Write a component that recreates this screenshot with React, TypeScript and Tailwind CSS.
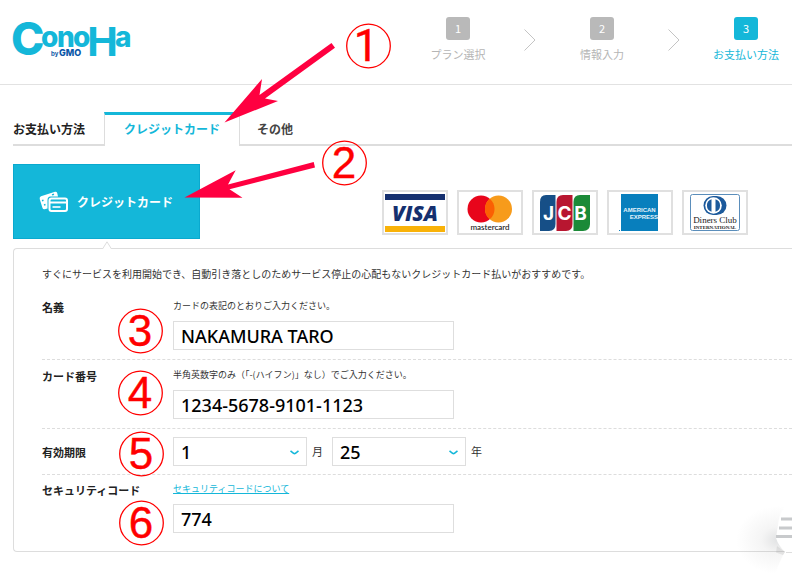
import { ReactNode, useState } from 'react';
import clsx from 'clsx';

const steps = [
    { no: 1, label: 'プラン選択' },
    { no: 2, label: '情報入力' },
    { no: 3, label: 'お支払い方法' },
];

const inputClass = 'h-[29px] w-full max-w-[281px] border border-[#dedede] bg-white px-[7px] text-lg leading-none font-medium text-black outline-none font-["Noto_Sans","Noto_Sans_CJK_JP",sans-serif]';

function Logo() {
    return (
        <svg width="120" height="38" viewBox="13 20 120 38" className="overflow-visible" fill="#14b7d9" fontWeight="800" fontFamily="Inter, sans-serif" role="img" aria-label="ConoHa by GMO">
            <text x="11" y="55" fontSize="45">C</text>
            <text x="41" y="47" fontSize="28">o</text>
            <text x="57" y="47" fontSize="28">n</text>
            <text x="73" y="47" fontSize="28">o</text>
            <text x="87" y="56" fontSize="43" fontWeight="700" fontFamily="'Liberation Sans', sans-serif">H</text>
            <text x="115" y="47" fontSize="28">a</text>
            <text x="51" y="56" fontSize="6" fontWeight="700" fill="#0b57a8">by</text>
            <text x="59" y="56" fontSize="9" fill="#0b57a8">GMO</text>
        </svg>
    );
}

function Steps() {
    return (
        <ol className="flex gap-8">
            {steps.map((step, i) => {
                const active = step.no === 3;
                return (
                    <li key={step.no} className="flex items-center gap-8">
                        {i > 0 && (
                            <svg width="12" height="22" viewBox="0 0 12 22" fill="none" stroke="#c4c4c4">
                                <path d="M0.5 0.5 11 11 0.5 21.5" />
                            </svg>
                        )}
                        <div className={clsx('flex w-[68px] flex-col items-center gap-1.5 text-[11px]', active ? 'text-[#14b7d9]' : 'text-[#b5b5b5]')}>
                            <span className={clsx('flex h-[23px] w-6 items-center justify-center rounded-[3px] text-white', active ? 'bg-[#14b7d9]' : 'bg-[#b9b9b9]')}>
                                {step.no}
                            </span>
                            <span className="leading-4 whitespace-nowrap">{step.label}</span>
                        </div>
                    </li>
                );
            })}
        </ol>
    );
}

function CardsIcon() {
    return (
        <svg width="30" height="22" viewBox="0 0 30 22" fill="none">
            <path d="M2 5.2 16 0.8Q17.6 0.4 18.2 2L19 5.5H11.5Q8.5 5.5 8.5 9V17.5L5.5 18.2Q4 18.4 3.5 17L0.7 8Q0.4 6 2 5.2Z" fill="#fff" />
            <path d="M3 9.8 4.5 9.3M5 14 6.5 13.5M13 3.9 15 3.3" stroke="#14b7d9" strokeWidth="1.5" />
            <rect x="10.5" y="7.5" width="17.5" height="12.5" rx="2" stroke="#fff" strokeWidth="2" />
            <path d="M10.5 11.5H28" stroke="#fff" strokeWidth="2" />
            <path d="M13.5 16H21.5" stroke="#fff" strokeWidth="1.6" />
        </svg>
    );
}

function BrandCard({ label, children }: { label: string; children: ReactNode }) {
    return (
        <li className="border-2 border-[#e0e0e0] bg-white">
            <svg width="62" height="41" viewBox="0 0 62 41" role="img" aria-label={label}>
                {children}
            </svg>
        </li>
    );
}

function Brands() {
    return (
        <ul className="flex gap-[9px] pb-1">
            <BrandCard label="VISA">
                <rect x="1" y="2" width="60" height="6" fill="#15306f" />
                <rect x="1" y="34" width="60" height="6" fill="#f9b208" />
                <text x="31" y="29" textAnchor="middle" fontSize="21" fontWeight="800" fontStyle="italic" fontFamily="'Open Sans', sans-serif" fill="#15306f">VISA</text>
            </BrandCard>
            <BrandCard label="mastercard">
                <circle cx="22" cy="17" r="13.5" fill="#e8051b" />
                <circle cx="39.5" cy="17" r="13.5" fill="#f79b1b" />
                <path d="M30.75 6.7A13.5 13.5 0 0 1 30.75 27.3A13.5 13.5 0 0 1 30.75 6.7Z" fill="#fb5f03" />
                <text x="31" y="38" textAnchor="middle" fontSize="8" fontWeight="500" fontFamily="Lato, sans-serif" fill="#111">mastercard</text>
            </BrandCard>
            <BrandCard label="JCB">
                <path d="M6 10Q6 3 12 3H21.5V32Q21.5 39 15 39H6Z" fill="#164f87" />
                <path d="M22.5 10Q22.5 3 29 3H38.5V32Q38.5 39 32 39H22.5Z" fill="#b81630" />
                <path d="M39.5 10Q39.5 3 46 3H56V32Q56 39 49 39H39.5Z" fill="#1b8a38" />
                <g fill="#fff" fontSize="19" fontWeight="700" fontFamily="Inter, sans-serif" textAnchor="middle">
                    <text x="14.5" y="28">J</text>
                    <text x="30.5" y="28">C</text>
                    <text x="46.5" y="28">B</text>
                </g>
            </BrandCard>
            <BrandCard label="AMERICAN EXPRESS">
                <rect x="12" y="2" width="37" height="37" fill="#087fbd" />
                <g fill="#e6f4fb" fontSize="6" fontWeight="700" fontFamily="'Liberation Sans', sans-serif">
                    <text x="30.5" y="20" textAnchor="middle">AMERICAN</text>
                    <text x="49" y="27" textAnchor="end">EXPRESS</text>
                </g>
                <path d="M10 38.5H11" stroke="#087fbd" />
            </BrandCard>
            <BrandCard label="Diners Club INTERNATIONAL">
                <rect x="6.5" y="2.5" width="49" height="36" rx="2" fill="#fff" stroke="#5b8ebb" />
                <path d="M29 4H32.5A10 9.5 0 0 1 32.5 23H29A9.5 9.5 0 0 1 29 4Z" fill="#1c5a9c" />
                <circle cx="29.5" cy="13.5" r="8.3" fill="#fff" />
                <path d="M27.5 7.3V19.7A6.5 6.5 0 0 1 27.5 7.3ZM31.5 7.3V19.7A6.5 6.5 0 0 0 31.5 7.3Z" fill="#1c5a9c" />
                <text x="31" y="31" textAnchor="middle" fontSize="9" fontFamily="'Liberation Serif', serif" fill="#222">Diners Club</text>
                <text x="31" y="37" textAnchor="middle" fontSize="5" fontWeight="700" fontFamily="'Liberation Serif', serif" fill="#222">INTERNATIONAL</text>
            </BrandCard>
        </ul>
    );
}

function Row({ label, htmlFor, className, children }: { label: string; htmlFor: string; className?: string; children: ReactNode }) {
    return (
        <div className={clsx('flex', className)}>
            <label htmlFor={htmlFor} className="w-[131px] shrink-0 text-[11px] leading-[18px] font-bold text-[#222]">{label}</label>
            <div className="flex min-w-0 flex-1 flex-col gap-[7px]">{children}</div>
        </div>
    );
}

function SelectBox({ id, label, value, options }: { id: string; label: string; value: string; options: string[] }) {
    const [current, setCurrent] = useState(value);
    return (
        <div className="relative w-[134px]">
            <select
                id={id}
                aria-label={label}
                value={current}
                onChange={(e) => setCurrent(e.target.value)}
                className='block h-[29px] w-full appearance-none border border-[#dedede] bg-white px-[7px] text-lg leading-none font-medium text-black outline-none font-["Noto_Sans","Noto_Sans_CJK_JP",sans-serif]'
            >
                {options.map((o) => <option key={o}>{o}</option>)}
            </select>
            <svg width="9" height="5" viewBox="0 0 9 5" fill="none" stroke="#14b7d9" strokeWidth="1.6" className="pointer-events-none absolute top-[13px] right-2">
                <path d="M0.5 0.8 3.6 3.3Q4.5 3.9 5.4 3.3L8.5 0.8" />
            </svg>
        </div>
    );
}

const marks = [
    { no: 1, x: 368, y: 46 },
    { no: 2, x: 344, y: 163 },
    { no: 3, x: 140, y: 331 },
    { no: 4, x: 140, y: 393 },
    { no: 5, x: 141, y: 454 },
    { no: 6, x: 141, y: 523 },
];

// Red arrows and numbers laid over the form
function Guide() {
    return (
        <svg className="pointer-events-none absolute top-0 left-0" width="400" height="560" viewBox="0 0 400 560">
            <g fill="#ff0040">
                <path d="M224.5 122.5 262 79 259.5 95 331.5 43 335 47.8 265 98.5 278 101Z" />
                <path d="M184.5 197.5 235.7 170.3 228 184.5 313.7 162 315 167.5 229.5 189.3 242.5 197.7Z" />
            </g>
            {marks.map((m) => (
                <g key={m.no} fill="#f00">
                    <circle cx={m.x + 0.5} cy={m.y} r="21.8" fill="none" stroke="#f00" strokeWidth="1.3" />
                    <text
                        x={m.no === 1 ? m.x - 2 : m.x}
                        y={m.y + 15}
                        textAnchor="middle"
                        fontSize="44"
                        stroke="#f00"
                        strokeWidth="0.4"
                        fontFamily={m.no === 1 ? 'Roboto, sans-serif' : "'Liberation Sans', sans-serif"}
                    >
                        {m.no}
                    </text>
                </g>
            ))}
        </svg>
    );
}

function CornerMenu() {
    return (
        <svg className="pointer-events-none absolute right-0 bottom-0" width="60" height="70" viewBox="0 0 60 70">
            <defs>
                <radialGradient id="corner-shade">
                    <stop offset="0" stopColor="#8a8f94" stopOpacity="0.26" />
                    <stop offset="0.4" stopColor="#999" stopOpacity="0.1" />
                    <stop offset="1" stopColor="#999" stopOpacity="0" />
                </radialGradient>
            </defs>
            <ellipse cx="46" cy="35" rx="42" ry="34" fill="url(#corner-shade)" />
            <path d="M60 0H54Q47 8 46 20L44 33Q46 40 53 47L51 50 42 70H60Z" fill="#fff" />
            <path d="M49 14H60M47 23H60M44 31.5H60" stroke="#c8cacc" strokeWidth="3.2" />
            <path d="M54 47.5H60" stroke="#dedede" />
            <path d="M45 41 53 47 51 50 44 47.5Z" fill="#999" fillOpacity="0.2" />
        </svg>
    );
}

export default function App() {
    const [holder, setHolder] = useState('NAKAMURA TARO');
    const [cardNumber, setCardNumber] = useState('1234-5678-9101-1123');
    const [code, setCode] = useState('774');

    return (
        <div className='relative min-h-screen bg-white font-["Noto_Sans_CJK_JP",sans-serif] text-[#333]'>
            <header className="flex items-start justify-between border-b border-[#e2e2e2] pr-3 pb-[22px] pl-[13px]">
                <div className="pt-5"><Logo /></div>
                <div className="pt-[17px]"><Steps /></div>
            </header>

            <main className="pt-[27px] pb-[22px] pl-[13px]">
                <nav className="flex h-[34px] text-xs font-bold">
                    <h1 className="w-[91px] border-b-2 border-[#ddd] leading-[34px] text-[#222]">お支払い方法</h1>
                    <a href="#card" className="w-[136px] border-x border-t-3 border-x-[#ddd] border-t-[#14b7d9] text-center leading-[28px] text-[#14b7d9]">クレジットカード</a>
                    <div className="flex-1 border-b-2 border-[#ddd] pl-[17px] leading-[34px] text-[#444]">
                        <a href="#other">その他</a>
                    </div>
                </nav>

                <div className="mt-[18px] flex items-end justify-between pr-11">
                    <button type="button" className="flex h-[75px] w-[187px] items-center gap-2 border border-[#0aa9cf] bg-[#14b7d9] pl-[25px] text-xs font-bold text-white">
                        <CardsIcon />
                        クレジットカード
                    </button>
                    <Brands />
                </div>

                <form className="relative mt-[9px] rounded-l border border-r-0 border-[#ddd] pt-[17px] pb-[18px] pl-7">
                    <svg className="absolute -top-2 left-[88px]" width="10" height="9" viewBox="0 0 10 9">
                        <path d="M0.5 8 5 0.8 9.5 8V9H0.5Z" fill="#fff" />
                        <path d="M0.5 8 5 0.8 9.5 8" fill="none" stroke="#ddd" />
                    </svg>
                    <p className="mb-[9px] text-[10px] leading-4">
                        すぐにサービスを利用開始でき、自動引き落としのためサービス停止の心配もないクレジットカード払いがおすすめです。
                    </p>
                    <Row label="名義" htmlFor="holder" className="border-b border-dashed border-[#ddd] pt-[7px] pb-[9px]">
                        <p className="text-[9px] leading-4">カードの表記のとおりご入力ください。</p>
                        <input id="holder" value={holder} onChange={(e) => setHolder(e.target.value)} className={inputClass} />
                    </Row>
                    <Row label="カード番号" htmlFor="number" className="border-b border-dashed border-[#ddd] pt-[7px] pb-[9px]">
                        <p className="text-[9px] leading-4">半角英数字のみ（「-(ハイフン)」なし）でご入力ください。</p>
                        <input id="number" value={cardNumber} onChange={(e) => setCardNumber(e.target.value)} className={inputClass} />
                    </Row>
                    <Row label="有効期限" htmlFor="month" className="items-center border-b border-dashed border-[#ddd] py-2">
                        <div className="flex items-center gap-[5px] text-[11px]">
                            <SelectBox id="month" label="月" value="1" options={['1', '2', '3', '4', '5', '6', '7', '8', '9', '10', '11', '12']} />
                            <span className="pr-1">月</span>
                            <SelectBox id="year" label="年" value="25" options={['25', '26', '27', '28', '29', '30']} />
                            <span>年</span>
                        </div>
                    </Row>
                    <Row label="セキュリティコード" htmlFor="code" className="pt-[6px]">
                        <a href="#about-code" className="self-start text-[9px] leading-4 text-[#14b7d9] underline">セキュリティコードについて</a>
                        <input id="code" value={code} onChange={(e) => setCode(e.target.value)} className={inputClass} />
                    </Row>
                </form>
            </main>

            <Guide />
            <CornerMenu />
        </div>
    );
}
